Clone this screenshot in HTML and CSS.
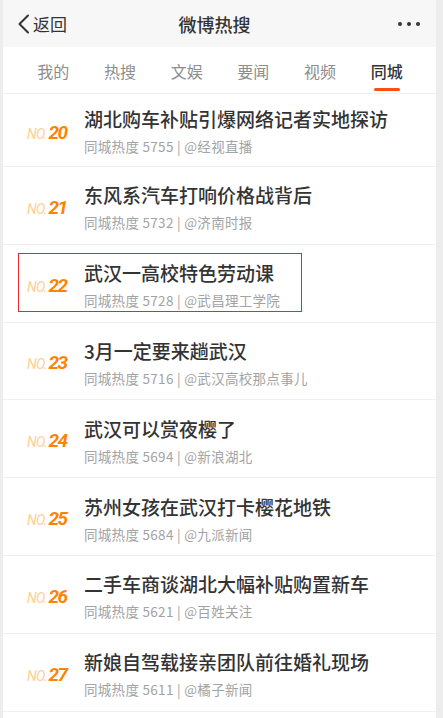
FILE: index.html
```html
<!DOCTYPE html>
<html lang="zh-CN">
<head>
    <meta charset="UTF-8">
    <meta name="viewport" content="width=device-width, initial-scale=1.0">
    <title>微博热搜</title>
    <link rel="stylesheet" href="styles.css">
</head>
<body>
    <div class="page">
        <div class="topbar">
            <div class="back">
                <svg width="13" height="20" viewBox="0 0 13 20"><path d="M11 1.5 L2.5 10 L11 18.5" fill="none" stroke="#333" stroke-width="2" stroke-linecap="round" stroke-linejoin="round"/></svg>
                <span>返回</span>
            </div>
            <div class="title">微博热搜</div>
            <div class="more"><i></i><i></i><i></i></div>
        </div>
        <div class="tabs">
            <div class="tab">我的</div>
            <div class="tab">热搜</div>
            <div class="tab">文娱</div>
            <div class="tab">要闻</div>
            <div class="tab">视频</div>
            <div class="tab active">同城</div>
        </div>
        <div class="list">
            <div class="item first">
                <div class="rank"><span class="no">NO.</span><span class="num">20</span></div>
                <div class="text">
                    <div class="headline">湖北购车补贴引爆网络记者实地探访</div>
                    <div class="meta">同城热度 5755 | @经视直播</div>
                </div>
            </div>
            <div class="item">
                <div class="rank"><span class="no">NO.</span><span class="num">21</span></div>
                <div class="text">
                    <div class="headline">东风系汽车打响价格战背后</div>
                    <div class="meta">同城热度 5732 | @济南时报</div>
                </div>
            </div>
            <div class="item">
                <div class="mark"></div>
                <div class="rank"><span class="no">NO.</span><span class="num">22</span></div>
                <div class="text">
                    <div class="headline">武汉一高校特色劳动课</div>
                    <div class="meta">同城热度 5728 | @武昌理工学院</div>
                </div>
            </div>
            <div class="item">
                <div class="rank"><span class="no">NO.</span><span class="num">23</span></div>
                <div class="text">
                    <div class="headline">3月一定要来趟武汉</div>
                    <div class="meta">同城热度 5716 | @武汉高校那点事儿</div>
                </div>
            </div>
            <div class="item">
                <div class="rank"><span class="no">NO.</span><span class="num">24</span></div>
                <div class="text">
                    <div class="headline">武汉可以赏夜樱了</div>
                    <div class="meta">同城热度 5694 | @新浪湖北</div>
                </div>
            </div>
            <div class="item">
                <div class="rank"><span class="no">NO.</span><span class="num">25</span></div>
                <div class="text">
                    <div class="headline">苏州女孩在武汉打卡樱花地铁</div>
                    <div class="meta">同城热度 5684 | @九派新闻</div>
                </div>
            </div>
            <div class="item">
                <div class="rank"><span class="no">NO.</span><span class="num">26</span></div>
                <div class="text">
                    <div class="headline">二手车商谈湖北大幅补贴购置新车</div>
                    <div class="meta">同城热度 5621 | @百姓关注</div>
                </div>
            </div>
            <div class="item">
                <div class="rank"><span class="no">NO.</span><span class="num">27</span></div>
                <div class="text">
                    <div class="headline">新娘自驾载接亲团队前往婚礼现场</div>
                    <div class="meta">同城热度 5611 | @橘子新闻</div>
                </div>
            </div>
        </div>
    </div>
</body>
</html>
```

FILE: styles.css
```css
body {
    margin: 0;
    background-color: #ededed;
    font-family: "Noto Sans CJK SC", "Noto Sans", sans-serif;
    color: #333;
    height: 718px;
    overflow: hidden;
}
.page {
    width: 433px;
    margin-left: 3px;
    background-color: #fff;
    min-height: 718px;
}
.topbar {
    height: 47px;
    background-color: #f7f7f7;
    display: grid;
    grid-template-columns: 1fr auto 1fr;
    align-items: center;
}
.back {
    display: flex;
    align-items: center;
    padding-left: 14px;
    font-size: 17px;
    color: #333;
}
.back svg {
    margin-right: 3px;
}
.title {
    font-size: 18px;
    font-weight: 500;
    margin-right: 10px;
}
.more {
    display: flex;
    justify-content: flex-end;
    gap: 5px;
    padding-right: 16px;
}
.more i {
    width: 4px;
    height: 4px;
    border-radius: 50%;
    background-color: #333;
}
.tabs {
    height: 46px;
    display: grid;
    grid-template-columns: repeat(6, 1fr);
    padding: 0 16px 0 17px;
    border-bottom: 1px solid #f0f0f0;
}
.tab {
    position: relative;
    display: flex;
    justify-content: center;
    align-items: center;
    padding-top: 2px;
    font-size: 16px;
    color: #8e8e8e;
}
.tab.active {
    color: #333;
    font-weight: 500;
}
.tab.active::after {
    content: "";
    position: absolute;
    left: 50%;
    bottom: 2px;
    width: 26px;
    height: 3px;
    margin-left: -13px;
    border-radius: 2px;
    background-color: #fe4f12;
}
.item {
    position: relative;
    height: 76.8px;
    display: flex;
    align-items: center;
    border-bottom: 1px solid #f0f0f0;
}
.item.first {
    height: 72px;
}
.item.first .text {
    margin-top: -2px;
}
.rank {
    display: flex;
    align-items: baseline;
    width: 57px;
    padding-left: 24px;
    padding-top: 4px;
    font-family: "Roboto", sans-serif;
    font-style: italic;
    white-space: nowrap;
}
.rank .no {
    font-size: 14px;
    letter-spacing: -0.8px;
    color: #ffcf94;
    margin-right: 2px;
}
.rank .num {
    font-size: 19px;
    font-weight: bold;
    letter-spacing: -1.5px;
    color: #ff8300;
}
.text {
    display: flex;
    flex-direction: column;
    padding-top: 4px;
}
.headline {
    font-size: 19px;
    line-height: 24px;
    font-weight: 500;
    color: #333;
}
.meta {
    font-size: 13.5px;
    line-height: 18px;
    margin-top: 6px;
    letter-spacing: 0.3px;
    color: #a3a3a3;
}
.mark {
    position: absolute;
    left: 15px;
    top: 8px;
    width: 282px;
    height: 57px;
    border: 1px solid #e8262b;
}
```
